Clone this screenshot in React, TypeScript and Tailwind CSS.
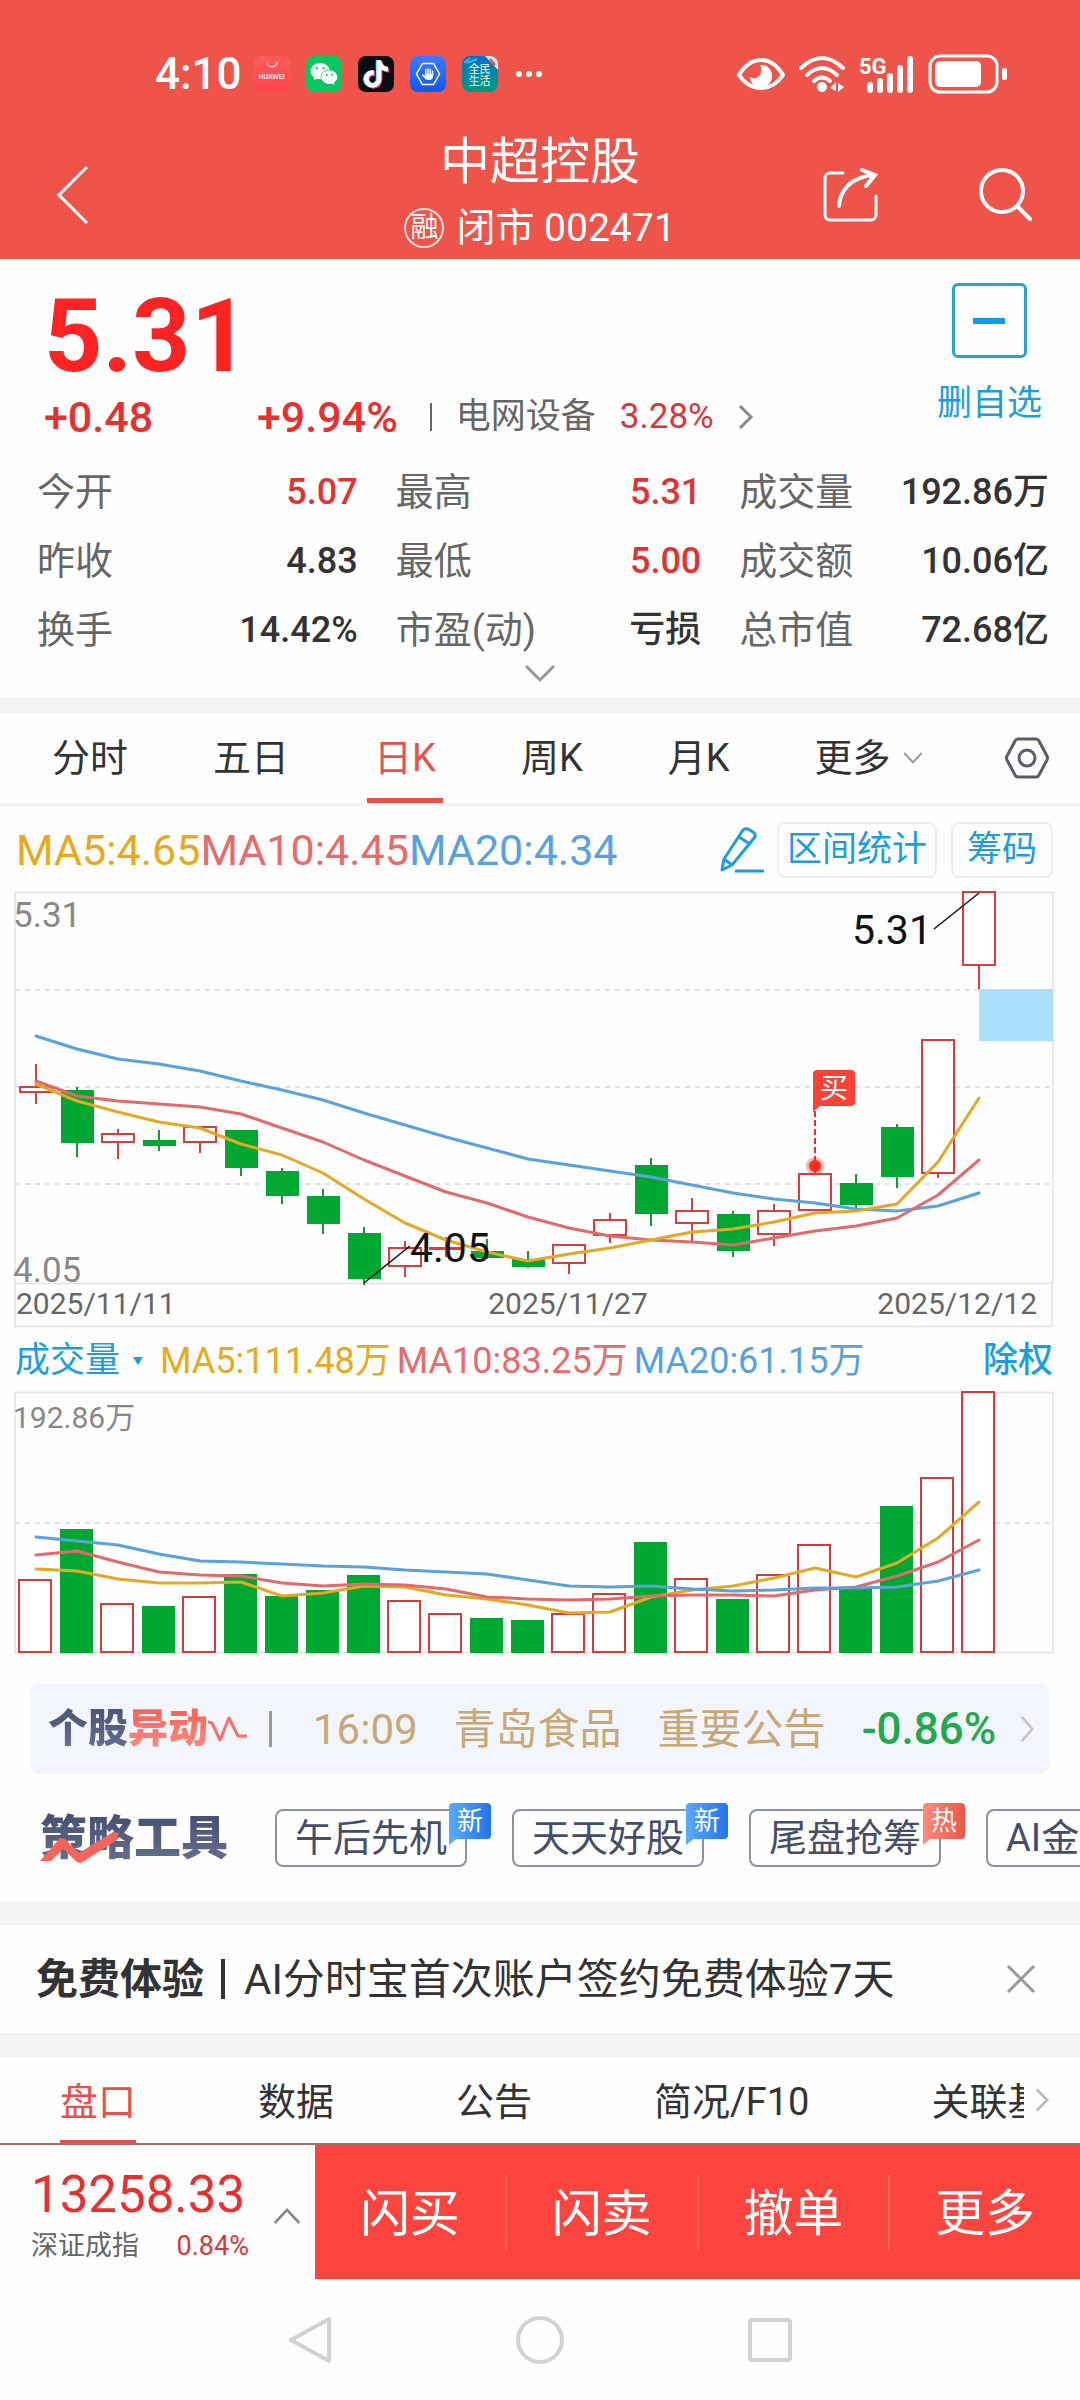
import { useState } from "react";
import { FaTiktok, FaWeixin, FaHand } from "react-icons/fa6";

type Candle = {
  up: boolean;
  top: number;
  bottom: number;
  high: number;
  low: number;
};

const c = (
  up: boolean,
  top: number,
  bottom: number,
  high: number,
  low: number
): Candle => ({ up, top, bottom, high, low });

const candles: Candle[] = [
  c(true, 207, 212, 184, 224),
  c(false, 210, 263, 207, 277),
  c(true, 254, 262, 249, 279),
  c(false, 260, 266, 250, 271),
  c(true, 247, 262, 247, 273),
  c(false, 250, 288, 250, 296),
  c(false, 291, 316, 288, 324),
  c(false, 316, 344, 309, 354),
  c(false, 353, 399, 347, 405),
  c(true, 368, 386, 361, 397),
  c(true, 368, 368, 357, 377),
  c(false, 371, 378, 359, 379),
  c(false, 379, 387, 371, 388),
  c(true, 365, 383, 365, 394),
  c(true, 340, 355, 333, 363),
  c(false, 285, 334, 278, 346),
  c(true, 331, 343, 318, 361),
  c(false, 334, 371, 331, 377),
  c(true, 331, 354, 324, 366),
  c(true, 294, 330, 286, 330),
  c(false, 303, 325, 294, 332),
  c(false, 247, 297, 244, 308),
  c(true, 160, 293, 160, 298),
  c(true, 12, 85, 12, 109),
];

const priceLines = [
  {
    color: "#5aa2de",
    points: [156, 169, 179, 184, 191, 201, 210, 220, 233, 245, 257, 268, 279, 285, 291, 297, 305, 313, 319, 323, 329, 331, 326, 313],
  },
  {
    color: "#e36a6a",
    points: [201, 216, 221, 224, 227, 234, 248, 262, 280, 296, 312, 323, 337, 348, 356, 360, 362, 365, 358, 351, 346, 338, 315, 280],
  },
  {
    color: "#e3a826",
    points: [204, 221, 232, 242, 248, 264, 275, 293, 319, 343, 360, 372, 381, 374, 368, 360, 352, 349, 342, 333, 331, 324, 282, 218],
  },
];

const volumes = [194, 143, 218, 220, 211, 188, 210, 204, 189, 215, 228, 232, 234, 228, 208, 156, 193, 213, 189, 159, 202, 120, 92, 6];

const volumeLines = [
  {
    color: "#e3a826",
    points: [183, 185, 193, 197, 197, 196, 210, 207, 200, 201, 209, 213, 219, 227, 226, 211, 204, 200, 192, 182, 191, 177, 152, 116],
  },
  {
    color: "#e36a6a",
    points: [169, 165, 176, 186, 189, 190, 197, 200, 198, 199, 203, 211, 213, 214, 213, 210, 209, 209, 210, 204, 201, 190, 176, 154],
  },
  {
    color: "#5aa2de",
    points: [151, 155, 159, 168, 175, 176, 178, 180, 181, 184, 186, 188, 194, 200, 201, 200, 203, 205, 204, 202, 202, 201, 195, 184],
  },
];

const stats = [
  { label: "今开", value: "5.07", red: true },
  { label: "最高", value: "5.31", red: true },
  { label: "成交量", value: "192.86万", red: false },
  { label: "昨收", value: "4.83", red: false },
  { label: "最低", value: "5.00", red: true },
  { label: "成交额", value: "10.06亿", red: false },
  { label: "换手", value: "14.42%", red: false },
  { label: "市盈(动)", value: "亏损", red: false },
  { label: "总市值", value: "72.68亿", red: false },
];

const tools = [
  { name: "午后先机", tag: "新" },
  { name: "天天好股", tag: "新" },
  { name: "尾盘抢筹", tag: "热" },
  { name: "AI金股", tag: "" },
];

const xAt = (index: number) => 36 + index * 41;

function toPoints(values: number[]) {
  return values.map((y, i) => `${xAt(i)},${y}`).join(" ");
}

function Chevron({ d, className }: { d: string; className: string }) {
  return (
    <svg
      viewBox="0 0 32 32"
      fill="none"
      stroke="currentColor"
      strokeWidth="3"
      className={className}
      aria-hidden="true"
    >
      <path d={d} />
    </svg>
  );
}

function StatusBar() {
  return (
    <div className="flex h-[130px] items-start justify-between pt-[50px] pr-[72px] pl-[155px]">
      <div className="flex h-12 items-center gap-4">
        <span className="text-[44px] leading-[48px] font-medium">4:10</span>
        <span className="-ml-1 flex h-9 w-9 flex-col items-center rounded-lg bg-gradient-to-b from-[#ff5b58] to-[#ff444e]">
          <svg viewBox="0 0 36 18" className="h-[18px] w-9" fill="none" stroke="#fff">
            <path d="M13 6a5 5 0 0 0 10 0" />
          </svg>
          <span className="text-[7px] leading-[7px] font-medium">HUAWEI</span>
        </span>
        <span className="flex h-9 w-9 items-center justify-center rounded-lg bg-[#07c860]">
          <FaWeixin className="h-7 w-7" />
        </span>
        <span className="flex h-9 w-9 items-center justify-center rounded-lg bg-[#0b0b14]">
          <span className="relative h-7 w-6">
            <FaTiktok className="absolute top-0 -left-px h-7 w-6 text-[#3fe6e6]" />
            <FaTiktok className="absolute top-px left-px h-7 w-6 text-[#f5365c]" />
            <FaTiktok className="absolute top-0 left-0 h-7 w-6 text-white" />
          </span>
        </span>
        <span className="relative flex h-9 w-9 items-center justify-center rounded-lg bg-gradient-to-b from-[#3c7bff] to-[#0f55f2]">
          <svg viewBox="0 0 36 36" className="absolute h-9 w-9" fill="none" stroke="#fff" strokeWidth="1.5">
            <path d="M12.5 7.5h11L29.5 18l-6 10.500h-11L6.500 18z" />
          </svg>
          <FaHand className="h-3 w-3" />
        </span>
        <span className="relative flex h-9 w-9 flex-col items-center justify-center overflow-hidden rounded-lg bg-gradient-to-b from-[#0870c9] to-[#0a9a76] text-[11px] leading-[12px]">
          <svg viewBox="0 0 36 36" className="absolute h-9 w-9">
            <path d="M23 0h13v14z" fill="#e9e3e6" />
            <path d="m28 3 5 6" stroke="#d9474d" strokeWidth="2" />
            <path d="M2 7l6-5M5 7l10-4" stroke="#35b6ef" strokeWidth="2" />
          </svg>
          <span className="relative mt-1">全民</span>
          <span className="relative">生活</span>
        </span>
        <svg viewBox="0 0 30 10" className="h-[10px] w-[30px]" fill="#fff">
          <circle cx="5" cy="5" r="3" />
          <circle cx="15" cy="5" r="3" />
          <circle cx="25" cy="5" r="3" />
        </svg>
      </div>
      <div className="flex h-12 items-center gap-[13px]">
        <svg viewBox="0 0 48 36" className="h-9 w-12">
          <path
            d="M2 19C8 9 15 4 24 4s16 5 22 15c-6 9-13 13-22 13S8 28 2 19z"
            fill="none"
            stroke="#fff"
            strokeWidth="4"
            strokeLinejoin="round"
          />
          <path
            d="M23 9c8-1 12 5 12 11 0 7-5 11-11 11-7 0-11-5-11-10 2 1 4 2 6 1 5-2 7-7 4-13z"
            fill="#fff"
          />
        </svg>
        <svg viewBox="0 0 48 38" className="h-[38px] w-12" fill="none" stroke="#fff" strokeWidth="4" strokeLinecap="round">
          <path d="M3 13Q24-7 45 13M9 20Q24 6 39 20M16 26q8-7 16 0" />
          <circle cx="24" cy="32" r="5" fill="#fff" stroke="none" />
          <path d="m32 33 6-6v9zM46 32l-6-4v9z" fill="#fff" stroke="none" />
        </svg>
        <svg viewBox="0 0 56 38" className="h-[38px] w-14" fill="#fff">
          <text x="0" y="19" fontSize="22" fontWeight="700">
            5G
          </text>
          <rect x="8" y="27" width="6" height="11" rx="3" />
          <rect x="18" y="23" width="6" height="15" rx="3" />
          <rect x="28" y="18" width="6" height="20" rx="3" />
          <rect x="38" y="10" width="6" height="28" rx="3" />
          <rect x="48" y="1" width="6" height="37" rx="3" />
        </svg>
        <svg viewBox="0 0 80 40" className="h-10 w-20">
          <rect x="2" y="2" width="67" height="36" rx="10" fill="none" stroke="#fff" strokeWidth="3" />
          <rect x="7" y="7" width="46" height="26" rx="5" fill="#fff" />
          <rect x="74" y="14" width="5" height="12" rx="2" fill="#fff" />
        </svg>
      </div>
    </div>
  );
}

function TitleBar() {
  return (
    <div className="grid grid-cols-[1fr_auto_1fr] items-center">
      <button type="button" aria-label="返回" className="ml-[56px] w-8">
        <svg viewBox="0 0 32 58" className="h-[58px] w-8" fill="none" stroke="#fff" strokeWidth="3">
          <path d="M31 1 3 29l28 28" />
        </svg>
      </button>
      <div className="flex flex-col items-center gap-[10px] pb-[7px]">
        <h1 className="text-[50px] leading-[64px]">中超控股</h1>
        <p className="flex items-center gap-3 text-[39px] leading-[48px]">
          <span className="flex h-10 w-10 items-center justify-center rounded-full border-2 border-white/80 text-[28px]">
            融
          </span>
          闭市 002471
        </p>
      </div>
      <div className="flex items-center justify-end gap-[100px] pr-[48px]">
        <button type="button" aria-label="分享">
          <svg viewBox="0 0 56 56" className="h-14 w-14" fill="none" stroke="#fff" strokeWidth="3" strokeLinecap="round">
            <path d="M21 6H8a5 5 0 0 0-5 5v37a5 5 0 0 0 5 5h41a5 5 0 0 0 5-5V29" />
            <path d="M17 39c1-16 12-29 35-31M40 3l13 5-9 11" strokeWidth="4" />
          </svg>
        </button>
        <button type="button" aria-label="搜索">
          <svg viewBox="0 0 54 54" className="h-[54px] w-[54px]" fill="none" stroke="#fff" strokeWidth="4" strokeLinecap="round">
            <circle cx="24" cy="23" r="21" />
            <path d="m40 39 12 12" />
          </svg>
        </button>
      </div>
    </div>
  );
}

function Quote() {
  return (
    <section className="pt-6">
      <div className="flex justify-between pr-[38px] pl-[44px]">
        <div>
          <p className="text-[102px] leading-[106px] font-bold text-[#fd2323]">5.31</p>
          <div className="flex items-center leading-[56px]">
            <span className="w-[213px] text-[43px] font-medium text-[#e9302f]">+0.48</span>
            <span className="text-[43px] font-medium text-[#e9302f]">+9.94%</span>
            <span className="mr-6 ml-8 h-7 w-[2px] bg-[#666]" />
            <a href="#sector" className="flex items-center text-[35px] text-[#666]">
              电网设备
              <span className="ml-6 text-[#dd3535]">3.28%</span>
              <Chevron d="m10 5 11 11-11 11" className="ml-4 h-8 w-8 text-[#888]" />
            </a>
          </div>
        </div>
        <button
          type="button"
          className="flex flex-col items-center self-start text-[35px] leading-[56px] text-[#1a9fdc]"
        >
          <span className="flex h-[75px] w-[75px] items-center justify-center rounded-md border-[3px] border-[#2b9fdc]">
            <span className="h-[6px] w-8 bg-[#0f9df0]" />
          </span>
          <span className="mt-[18px]">删自选</span>
        </button>
      </div>
      <dl className="mt-[13px] grid grid-cols-[321fr_306fr_310fr] gap-x-[38px] pr-[31px] pl-[37px] leading-[69px]">
        {stats.map((item) => (
          <div key={item.label} className="flex justify-between">
            <dt className="text-[38px] text-[#666]">{item.label}</dt>
            <dd
              className={
                item.red
                  ? "text-[36px] font-medium text-[#e03434]"
                  : "text-[36px] font-medium text-[#333]"
              }
            >
              {item.value}
            </dd>
          </div>
        ))}
      </dl>
      <button type="button" aria-label="展开" className="flex h-[33px] w-full justify-center">
        <Chevron d="M2 1l14 14L30 1" className="h-8 w-8 text-[#999]" />
      </button>
    </section>
  );
}

function PeriodTabs() {
  const [active, setActive] = useState("日K");

  return (
    <nav className="flex h-[93px] items-stretch border-b-[3px] border-[#f4f4f4] pr-[30px] pl-[45px] text-[38px]">
      <div className="flex flex-1 gap-[71px]">
        {["分时", "五日", "日K", "周K", "月K"].map((tab) => (
          <button
            key={tab}
            type="button"
            onClick={() => setActive(tab)}
            className={
              tab === active
                ? "border-b-[5px] border-[#e8504d] px-[7px] pt-[5px] text-[#e8504d]"
                : "border-b-[5px] border-transparent px-[7px] pt-[5px] text-[#333]"
            }
          >
            {tab}
          </button>
        ))}
        <button type="button" className="flex items-center gap-3 pl-[7px] text-[#333]">
          更多
          <Chevron d="m2 8 14 15L30 8" className="h-5 w-5 text-[#999]" />
        </button>
      </div>
      <button type="button" aria-label="设置">
        <svg viewBox="0 0 46 46" className="h-[46px] w-[46px]" fill="none" stroke="#5b5b69" strokeWidth="3">
          <path d="M14 4h18q2 0 3 2l8 15q1 2 0 4l-8 15q-1 2-3 2H14q-2 0-3-2L3 25q-1-2 0-4l8-15q1-2 3-2z" />
          <circle cx="23" cy="23" r="8" />
        </svg>
      </button>
    </nav>
  );
}

function PriceChart() {
  return (
    <section>
      <div className="flex items-center justify-between pt-4 pr-[27px] pl-4">
        <p className="text-[43px] leading-[56px]">
          <span className="text-[#e8a91c]">MA5:4.65</span>
          <span className="text-[#e86a6a]">MA10:4.45</span>
          <span className="text-[#57a1e3]">MA20:4.34</span>
        </p>
        <div className="flex items-center text-[35px] leading-[52px] text-[#1a9fdc]">
          <button type="button" aria-label="画线" className="mr-3">
            <svg viewBox="0 0 46 46" className="h-[46px] w-[46px]" fill="none" stroke="currentColor" strokeWidth="3" strokeLinejoin="round">
              <path d="M24 3 5 32 3 43l10-5L36 10q1-3-2-5l-5-3q-3-1-5 1zM20 10l11 7M5 32l8 6M16 44h29" />
            </svg>
          </button>
          <button type="button" className="mr-[14px] rounded-lg border-2 border-[#eee] px-2">
            区间统计
          </button>
          <button type="button" className="rounded-lg border-2 border-[#eee] px-[14px]">
            筹码
          </button>
        </div>
      </div>
      <svg viewBox="0 0 1080 450" className="mt-[2px] block w-full">
        <g fill="none" stroke="#e2e2e2" strokeWidth="1.5">
          <rect x="15" y="12.5" width="1038" height="391" />
          <path d="M15 403v43.5h1037V403" />
          <path d="M15 110h1038M15 207h1038M15 304h1038" strokeDasharray="5 5" strokeWidth="2" />
        </g>
        <rect x="979" y="109" width="74" height="52" fill="#a9e1fd" />
        <g fill="#888" fontSize="35">
          <text x="13" y="47">5.31</text>
          <text x="13" y="402">4.05</text>
        </g>
        {candles.map((item, i) => (
          <g key={i} stroke={item.up ? "#dc3c3c" : "#159a35"} strokeWidth="2">
            <path d={`M${xAt(i)} ${item.high}V${item.low}`} />
            {item.up ? (
              <rect x={xAt(i) - 16} y={item.top} width="32" height={Math.max(item.bottom - item.top, 1)} fill="#fff" />
            ) : (
              <rect x={xAt(i) - 16} y={item.top} width="33" height={item.bottom - item.top} fill="#00a832" stroke="none" />
            )}
          </g>
        ))}
        {priceLines.map((line) => (
          <polyline
            key={line.color}
            points={toPoints(line.points)}
            fill="none"
            stroke={line.color}
            strokeWidth="3"
            strokeLinecap="round"
            strokeLinejoin="round"
          />
        ))}
        <path d="M815 231v52" stroke="#e8322c" strokeWidth="2" strokeDasharray="6 3" />
        <circle cx="815" cy="286" r="9" fill="#fb2c20" opacity="0.35" />
        <circle cx="815" cy="286" r="6" fill="#fb2c20" />
        <path d="M817 190h34q4 0 4 4v28q0 4-4 4h-31l-7 6v-38q0-4 4-4z" fill="#fb4237" />
        <text x="834" y="218" fontSize="28" textAnchor="middle" fill="#fff">
          买
        </text>
        <path d="M934 49 979 13M364 403l46-37" stroke="#111" strokeWidth="1.5" />
        <g fontSize="41" fill="#111">
          <text x="852" y="64">5.31</text>
          <text x="410" y="382">4.05</text>
        </g>
        <g fontSize="30" fill="#666">
          <text x="16" y="434">2025/11/11</text>
          <text x="568" y="434" textAnchor="middle">
            2025/11/27
          </text>
          <text x="1037" y="434" textAnchor="end">
            2025/12/12
          </text>
        </g>
      </svg>
    </section>
  );
}

function VolumeChart() {
  return (
    <section>
      <div className="flex items-center justify-between pt-[6px] pr-[27px] pl-[15px] text-[36px] leading-[50px]">
        <div className="flex items-center gap-[6px]">
          <button type="button" className="flex items-center gap-3 pr-[10px] text-[35px] text-[#1a9fdc]">
            成交量
            <svg viewBox="0 0 12 10" className="h-[10px] w-3" fill="currentColor">
              <path d="M1 1h10L6 9z" />
            </svg>
          </button>
          <span className="text-[#e8a91c]">MA5:111.48万</span>
          <span className="text-[#e86a6a]">MA10:83.25万</span>
          <span className="text-[#57a1e3]">MA20:61.15万</span>
        </div>
        <button type="button" className="text-[35px] font-medium text-[#1a9fdc]">
          除权
        </button>
      </div>
      <svg viewBox="0 0 1080 270" className="block w-full">
        <g fill="none" stroke="#e2e2e2" strokeWidth="1.5">
          <rect x="15" y="6.5" width="1038" height="260" />
          <path d="M15 137h1038" strokeDasharray="5 5" strokeWidth="2" />
        </g>
        <text x="13" y="42" fontSize="30" fill="#888">
          192.86万
        </text>
        {volumes.map((y, i) =>
          candles[i].up ? (
            <rect key={i} x={xAt(i) - 17} y={y} width="32" height={266 - y} fill="#fff" stroke="#d83a3a" strokeWidth="2" />
          ) : (
            <rect key={i} x={xAt(i) - 17} y={y} width="33" height={267 - y} fill="#00a832" />
          )
        )}
        {volumeLines.map((line) => (
          <polyline
            key={line.color}
            points={toPoints(line.points)}
            fill="none"
            stroke={line.color}
            strokeWidth="3"
            strokeLinecap="round"
            strokeLinejoin="round"
          />
        ))}
      </svg>
    </section>
  );
}

function Alerts() {
  return (
    <a
      href="#alerts"
      className="mx-[31px] mt-7 flex h-[90px] items-center rounded-lg bg-[#f2f5fc] pl-[17px] text-[42px] text-[#c9a878]"
    >
      <span className="flex items-center text-[40px] font-black [font-style:oblique_8deg]">
        <span className="bg-gradient-to-b from-[#465172] to-[#6a7595] bg-clip-text text-transparent">
          个股
        </span>
        <span className="bg-gradient-to-b from-[#f9564b] to-[#f9938b] bg-clip-text text-transparent">
          异动
        </span>
        <svg viewBox="0 0 40 36" className="h-9 w-10" fill="none" stroke="#f77067" strokeWidth="3" strokeLinejoin="round">
          <path d="m0 11 4 1 8 17 9-22 9 18h9" />
        </svg>
      </span>
      <span className="ml-[21px] h-9 w-[3px] bg-[#999]" />
      <span className="ml-[41px]">16:09</span>
      <span className="ml-[36px]">青岛食品</span>
      <span className="ml-[36px]">重要公告</span>
      <span className="ml-[36px] flex-1 text-[44px] font-medium text-[#22a94c]">-0.86%</span>
      <Chevron d="m10 2 12 14-12 14" className="mr-2 h-7 w-7 text-[#c4c4c4]" />
    </a>
  );
}

function Toolbox() {
  return (
    <div className="flex items-center overflow-hidden pt-[32px] pb-[31px] pl-[40px]">
      <h2 className="relative mr-[43px] shrink-0 bg-gradient-to-b from-[#3f4a6d] to-[#6a7595] bg-clip-text pr-1 text-[47px] leading-[64px] font-black text-transparent [font-style:oblique_8deg]">
        策略工具
        <svg viewBox="0 0 80 32" className="absolute bottom-[6px] left-0 h-8 w-20" fill="#f8645a">
          <path d="m0 29 20-23 5 1 14 14L73 0l6 1-2 7-36 23-4-1-14-13-12 12z" />
        </svg>
      </h2>
      <div className="flex gap-[45px]">
        {tools.map((tool) => (
          <button
            key={tool.name}
            type="button"
            className="relative shrink-0 rounded-lg border-2 border-[#8b93a3] px-[18px] text-[38px] leading-[54px] text-[#454e68]"
          >
            {tool.name}
            {tool.tag && (
              <span
                className={
                  tool.tag === "热"
                    ? "absolute -top-2 -right-[26px] rounded-sm bg-gradient-to-r from-[#ff8a7a] to-[#e8584a] px-2 text-[26px] leading-[36px] text-white"
                    : "absolute -top-2 -right-[26px] rounded-sm bg-gradient-to-r from-[#5aa9ff] to-[#2473ea] px-2 text-[26px] leading-[36px] text-white"
                }
              >
                {tool.tag}
                <svg
                  viewBox="0 0 10 8"
                  className="absolute top-[34px] left-0 h-2 w-[10px]"
                  fill={tool.tag === "热" ? "#ff8a7a" : "#5aa9ff"}
                >
                  <path d="M0 0h10L0 8z" />
                </svg>
              </span>
            )}
          </button>
        ))}
      </div>
    </div>
  );
}

function Promo() {
  return (
    <div className="flex h-[108px] items-center justify-between pr-[44px] pl-[36px] text-[42px] text-[#333]">
      <p className="flex items-center">
        <strong className="font-bold">免费体验</strong>
        <span className="mr-[19px] ml-[17px] h-10 w-1 bg-[#333]" />
        AI分时宝首次账户签约免费体验7天
      </p>
      <button type="button" aria-label="关闭">
        <svg viewBox="0 0 30 30" className="h-[30px] w-[30px]" stroke="#999" strokeWidth="3">
          <path d="m2 2 26 26M28 2 2 28" />
        </svg>
      </button>
    </div>
  );
}

function InfoTabs() {
  const [active, setActive] = useState("盘口");

  return (
    <nav className="flex h-[88px] items-stretch border-b-2 border-[#a96a66] pr-[24px] pl-[60px] text-[38px]">
      <div className="flex flex-1 gap-[122px] overflow-hidden">
        {["盘口", "数据", "公告", "简况/F10", "关联基金"].map((tab) => (
          <button
            key={tab}
            type="button"
            onClick={() => setActive(tab)}
            className={
              tab === active
                ? "shrink-0 border-b-[3px] border-[#e8504d] pt-2 text-[#e8504d]"
                : "shrink-0 border-b-[3px] border-transparent pt-2 text-[#333]"
            }
          >
            {tab}
          </button>
        ))}
      </div>
      <Chevron d="m10 4 12 12-12 12" className="ml-1 h-7 w-7 self-center text-[#bbb]" />
    </nav>
  );
}

function TradeBar() {
  return (
    <div className="flex h-[134px] items-stretch">
      <button type="button" className="flex w-[315px] items-center gap-6 pt-2 pl-[31px] text-left">
        <span className="w-[218px]">
          <span className="block text-[51px] leading-[60px] text-[#e9302f]">13258.33</span>
          <span className="flex justify-between text-[27px] leading-[42px] text-[#666]">
            深证成指 <span className="text-[#dd3535]">0.84%</span>
          </span>
        </span>
        <Chevron d="m2 24 14-15 14 15" className="h-7 w-7 text-[#888]" />
      </button>
      <div className="flex flex-1 items-center bg-[#fd443e] text-[50px] text-white">
        {["闪买", "闪卖", "撤单", "更多"].map((name) => (
          <button
            key={name}
            type="button"
            className="h-[75px] flex-1 border-r-2 border-[#ff6660] leading-[78px] last:border-r-0"
          >
            {name}
          </button>
        ))}
      </div>
    </div>
  );
}

function SystemNav() {
  return (
    <div className="flex h-[121px] items-center justify-center gap-[182px]">
      <button type="button" aria-label="后退">
        <svg viewBox="0 0 48 48" className="h-12 w-12" fill="none" stroke="#d2d2d2" strokeWidth="4" strokeLinejoin="round">
          <path d="M43 3v42L5 24z" />
        </svg>
      </button>
      <button type="button" aria-label="主页">
        <svg viewBox="0 0 48 48" className="h-12 w-12" fill="none" stroke="#d2d2d2" strokeWidth="4">
          <circle cx="24" cy="24" r="22" />
        </svg>
      </button>
      <button type="button" aria-label="最近任务">
        <svg viewBox="0 0 48 48" className="h-12 w-12" fill="none" stroke="#d2d2d2" strokeWidth="4">
          <rect x="4" y="4" width="40" height="40" rx="2" />
        </svg>
      </button>
    </div>
  );
}

export default function App() {
  return (
    <div className="min-h-screen overflow-hidden bg-[#fefefe] font-[family-name:Roboto,'Noto_Sans_CJK_SC',sans-serif]">
      <header className="bg-[#ee544a] text-white">
        <StatusBar />
        <TitleBar />
      </header>
      <main>
        <Quote />
        <div className="h-[15px] bg-[#f4f4f4]" />
        <PeriodTabs />
        <PriceChart />
        <VolumeChart />
        <Alerts />
        <Toolbox />
        <div className="h-6 bg-[#f4f4f4]" />
        <Promo />
        <div className="h-6 bg-[#f4f4f4]" />
        <InfoTabs />
      </main>
      <footer>
        <TradeBar />
        <SystemNav />
      </footer>
    </div>
  );
}
